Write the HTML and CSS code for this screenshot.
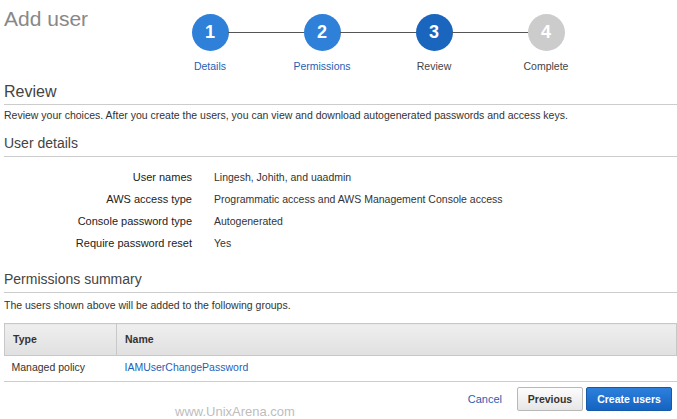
FILE: index.html
```html
<!DOCTYPE html>
<html>
<head>
<meta charset="utf-8">
<link rel="stylesheet" href="styles.css">
</head>
<body>
<div class="page">
  <div class="header">
    <div class="title">Add user</div>
    <div class="steps">
      <div class="step done"><div class="circle">1</div><div class="label link">Details</div></div>
      <div class="step done"><div class="circle">2</div><div class="label link">Permissions</div></div>
      <div class="step current"><div class="circle">3</div><div class="label">Review</div></div>
      <div class="step todo last"><div class="circle">4</div><div class="label">Complete</div></div>
    </div>
  </div>

  <h1 class="page-heading">Review</h1>
  <p class="desc">Review your choices. After you create the users, you can view and download autogenerated passwords and access keys.</p>

  <h2 class="section-heading">User details</h2>
  <div class="details">
    <div class="row"><div class="key">User names</div><div class="val">Lingesh, Johith, and uaadmin</div></div>
    <div class="row"><div class="key">AWS access type</div><div class="val">Programmatic access and AWS Management Console access</div></div>
    <div class="row"><div class="key">Console password type</div><div class="val">Autogenerated</div></div>
    <div class="row"><div class="key">Require password reset</div><div class="val">Yes</div></div>
  </div>

  <h2 class="section-heading perm">Permissions summary</h2>
  <p class="desc small">The users shown above will be added to the following groups.</p>

  <table class="grid">
    <thead>
      <tr><th class="c-type">Type</th><th class="c-name">Name</th></tr>
    </thead>
    <tbody>
      <tr><td class="c-type">Managed policy</td><td class="c-name"><span class="link">IAMUserChangePassword</span></td></tr>
    </tbody>
  </table>

  <div class="footer">
    <span class="cancel">Cancel</span>
    <button class="btn prev">Previous</button>
    <button class="btn primary">Create users</button>
  </div>
  <div class="watermark">www.UnixArena.com</div>
</div>
</body>
</html>
```

FILE: styles.css
```css
html, body {
  margin: 0;
  padding: 0;
  background: #fff;
}
body {
  font-family: "Liberation Sans", Arial, sans-serif;
  color: #333;
  font-size: 10.5px;
  width: 677px;
  height: 419px;
  overflow: hidden;
}
.page {
  position: relative;
  padding-left: 4px;
  height: 419px;
}
.header {
  display: flex;
  height: 82px;
}
.title {
  width: 150px;
  font-size: 21px;
  line-height: 24px;
  padding-top: 7px;
  color: #888;
}
.steps {
  display: flex;
}
.step {
  position: relative;
  width: 112px;
  padding-top: 14px;
  display: flex;
  flex-direction: column;
  align-items: center;
}
.step::after {
  content: "";
  position: absolute;
  top: 32px;
  left: calc(50% + 18px);
  width: calc(100% - 36px);
  height: 1px;
  background: #555;
}
.step.last::after {
  display: none;
}
.circle {
  width: 37px;
  height: 37px;
  border-radius: 50%;
  color: #fff;
  font-weight: bold;
  font-size: 18px;
  line-height: 37px;
  text-align: center;
}
.done .circle { background: #2f80d9; }
.current .circle { background: #1a65bd; }
.todo .circle { background: #cccccc; }
.label {
  margin-top: 9px;
  font-size: 10.5px;
  line-height: 13px;
  color: #444;
}
.link { color: #1f5fb5; }

.page-heading {
  margin: 0;
  font-size: 16px;
  line-height: 19px;
  font-weight: normal;
  color: #444;
  padding-bottom: 3px;
  border-bottom: 1px solid #ccc;
}
.desc {
  margin: 4px 0 0;
  line-height: 13px;
  color: #333;
}
.section-heading {
  margin: 13px 0 0;
  font-size: 14px;
  line-height: 17px;
  font-weight: normal;
  color: #444;
  padding-bottom: 4px;
  border-bottom: 1px solid #ccc;
}
.section-heading.perm {
  margin-top: 17px;
}
.desc.small {
  margin-top: 6px;
}
.details {
  margin-top: 9px;
}
.row {
  display: flex;
  height: 22px;
  line-height: 22px;
}
.key {
  width: 188px;
  text-align: right;
  font-size: 11px;
  color: #222;
}
.val {
  margin-left: 22px;
  color: #333;
}
.grid {
  margin-top: 11px;
  width: 673px;
  border-collapse: collapse;
}
.grid th {
  text-align: left;
  font-weight: bold;
  line-height: 13px;
  padding: 9px 8px;
  background: linear-gradient(#efefef, #e0e0e0);
  border-top: 1px solid #c8c8c8;
  border-bottom: 1px solid #c8c8c8;
  color: #333;
}
.grid th.c-type {
  border-left: 1px solid #c8c8c8;
  width: 95px;
}
.grid th.c-name {
  border-left: 1px solid #c8c8c8;
  border-right: 1px solid #c8c8c8;
}
.grid td {
  line-height: 13px;
  padding: 5px 8px 7px 7px;
}
.grid td.c-name {
  padding-left: 8px;
}
.footer {
  border-top: 1px solid #ccc;
  display: flex;
  justify-content: flex-end;
  align-items: center;
  padding: 5px 5px 0 0;
}
.cancel {
  color: #1f5fb5;
  font-size: 11px;
  margin-right: 15px;
}
.btn {
  font-family: "Liberation Sans", Arial, sans-serif;
  font-size: 10.5px;
  font-weight: bold;
  height: 24px;
  width: 66px;
  padding: 0;
  border: 1px solid #b8b8b8;
  border-radius: 2px;
  background: linear-gradient(#fdfdfd, #e6e6e6);
  color: #333;
  margin: 0;
}
.btn.primary {
  width: 86px;
  margin-left: 3px;
  background: linear-gradient(#2c80dc, #1563c2);
  border-color: #1759a8;
  color: #fff;
}
.watermark {
  position: absolute;
  left: 175px;
  top: 404px;
  font-size: 13px;
  line-height: 15px;
  color: #bdbdbd;
}
```
